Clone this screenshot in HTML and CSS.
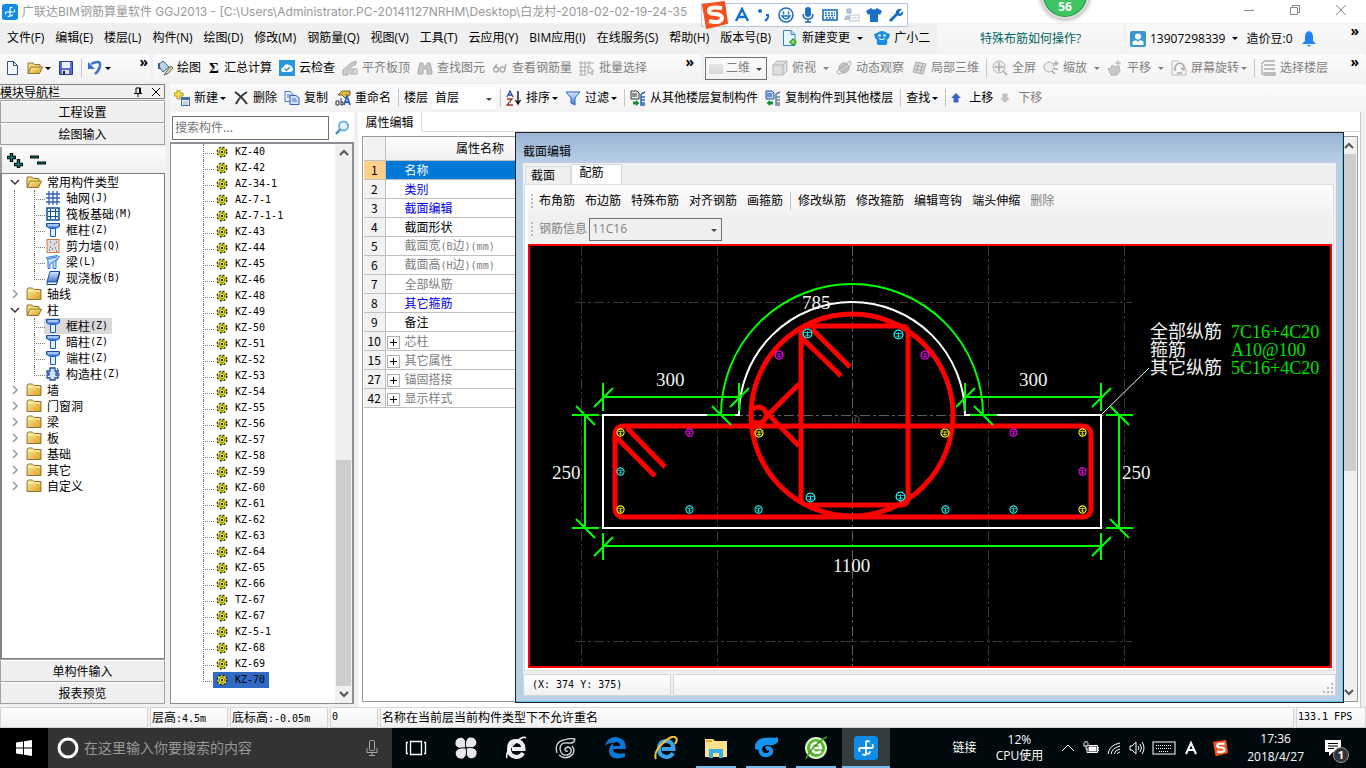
FILE: index.html
```
<!DOCTYPE html>
<html lang="zh-CN">
<head>
    <title>广联达BIM钢筋算量软件 GGJ2013</title>
    <meta charset="UTF-8">
    <meta name="viewport" content="width=device-width, initial-scale=1.0">
    <link rel="stylesheet" href="styles.css">
</head>
<body>
<!-- shared icons -->
<svg class="defs" aria-hidden="true">
    <linearGradient id="gold" x1="0" y1="0" x2="1" y2="1"><stop offset="0" stop-color="#fff3a8"/><stop offset="1" stop-color="#dc9a1c"/></linearGradient>
    <linearGradient id="blue" x1="0" y1="0" x2="0" y2="1"><stop offset="0" stop-color="#dcebff"/><stop offset="1" stop-color="#3c78d8"/></linearGradient>
    <symbol id="logo" viewBox="0 0 24 24"><rect width="24" height="24" rx="4" fill="#0e8ce8"/><path d="M12 17V7Q12 4 15 5.500M12 17Q12 20 9 18.500M7 12H17Q20 12 18.500 9M7 12Q4 12 5.500 15M12 17Q15 19 16 16" fill="none" stroke="#fff" stroke-width="1.800" stroke-linecap="round"/></symbol>
    <symbol id="gear" viewBox="0 0 12 12"><circle cx="6" cy="6" r="4.800" fill="#f4ee1a" stroke="#222" stroke-width="1.400" stroke-dasharray="2 1.770"/><circle cx="6" cy="6" r="2.600" fill="#ff2" stroke="#555" stroke-width=".7"/><path d="M6 1.500V4M6 8V10.500M1.500 6H4M8 6H10.500" stroke="#555" stroke-width=".7"/><rect x="5" y="5" width="2" height="2" fill="#222"/></symbol>
    <symbol id="folder" viewBox="0 0 16 14"><path d="M1 3V12.500H15V2.500H8L6.500 1H2Z" fill="url(#gold)" stroke="#8d742f"/><path d="M2 4h12" stroke="#fff5bd"/></symbol>
    <symbol id="folder-open" viewBox="0 0 16 14"><path d="M1 12V2H6L7.500 3.500H13V6" fill="#f7da78" stroke="#8d742f"/><path d="M1 12.500L4 6H15.500L12.500 12.500Z" fill="url(#gold)" stroke="#8d742f"/></symbol>
    <symbol id="column" viewBox="0 0 14 14"><path d="M.5.500H13.500V3.500L11 5H3L.5 3.500Z" fill="#5f9be8" stroke="#1b4b9c"/><path d="M4.500 5.500H9.500V13.500H4.500Z" fill="#e3efff" stroke="#1b5bd0"/><path d="M2 2h10" stroke="#e7f3ff"/></symbol>
    <symbol id="grid" viewBox="0 0 14 14"><path d="M3 0V14M7 0V14M11 0V14M0 3H14M0 7H14M0 11H14" stroke="#315fbd" stroke-width="1.300"/></symbol>
    <symbol id="raft" viewBox="0 0 14 14"><path d="M1 1H13V13H1Z" fill="#dff0ff" stroke="#174f93" stroke-width="1.500"/><path d="M4.500 2V12M9.500 2V12M2 4.500H12M2 9.500H12" stroke="#174f93"/><rect x="5" y="5" width="4" height="4" fill="#fff"/></symbol>
    <symbol id="wall" viewBox="0 0 14 14"><rect x="1" y=".5" width="12" height="13" fill="#ddd" stroke="#d9793d"/><path d="M4 3h1M8 5h1M4 8h1M6 10h1M9 9h1M10 3h1M3 11h1M10 12h1" stroke="#444"/></symbol>
    <symbol id="beam" viewBox="0 0 14 14"><path d="M.5 2.500L11 .5L13.500 2L10 5V13.500H7V7L4 9V13.500H2V6Z" fill="#c5e4ff" stroke="#2d78cf"/><path d="M2 4L11 2M7 7L12 4" stroke="#2d78cf"/></symbol>
    <symbol id="slab" viewBox="0 0 14 14"><path d="M4 .5H13.500L10.500 11H1Z" fill="url(#blue)" stroke="#1e50a8"/><path d="M1 11V13.500H10.500L13.500 3V.500" fill="none" stroke="#12357a"/></symbol>
    <symbol id="struct" viewBox="0 0 14 14"><path d="M4 1H9V4H12V6H10V8H12V11H9V13H4V11H1V8H3V6H1V4H4Z" fill="#cfe2fb" stroke="#244f9e" stroke-width="1.300"/><path d="M11 1L13 4M13 6v3" stroke="#244f9e"/></symbol>
    <symbol id="new" viewBox="0 0 16 16"><path d="M3.500 1.500H9.500L13.500 5.500V14.500H3.500Z" fill="#f5faff" stroke="#35507f"/><path d="M9.500 1.500V5.500H13.500" fill="none" stroke="#35507f"/></symbol>
    <symbol id="save" viewBox="0 0 16 16"><path d="M1.500 1.500H14.500V14.500H1.500Z" fill="#5a6ed2" stroke="#2a3a9a"/><rect x="4" y="2" width="8" height="6" fill="#eef2ff"/><rect x="4" y="10" width="7" height="4" fill="#dde"/><rect x="5" y="11" width="2" height="3" fill="#223"/></symbol>
    <symbol id="undo" viewBox="0 0 16 16"><path d="M4 4Q14-1 13 6Q12 11 8 14" fill="none" stroke="#3c6fd2" stroke-width="2.500"/><path d="M1 2V9H8Z" fill="#3c6fd2"/></symbol>
    <symbol id="paint" viewBox="0 0 16 16"><path d="M1 5L6 1L12 7L6 12Z" fill="#b8d4ef" stroke="#3b5f86"/><path d="M2 3V9" stroke="#3b5f86" stroke-width="2"/><path d="M14 6L9 12L7 15L11 13.500L16 8Z" fill="#ffd452" stroke="#3e63a0"/></symbol>
    <symbol id="cloud" viewBox="0 0 16 16"><rect width="16" height="16" fill="#2b95dd"/><path d="M3 12Q1 8 4.500 7Q6 3 10 5Q14 6 14 10Q13 12 11 12Z" fill="#fff"/><path d="M5.500 8.500L7.500 10.500L11 7" fill="none" stroke="#2b95dd" stroke-width="1.500"/></symbol>
    <symbol id="g-align" viewBox="0 0 16 16"><path d="M1 10L9 3L14 1V4L6 9V15H1Z" fill="#ccc" stroke="#aaa"/><path d="M8 9H15V14H8ZM10 9v5M12 9v5" fill="#eee" stroke="#aaa"/></symbol>
    <symbol id="g-find" viewBox="0 0 16 16"><path d="M3 3H6V6H10V3H13L15 12V14H10V9H6V14H1V12Z" fill="#c6c6c6" stroke="#aaa"/></symbol>
    <symbol id="g-glass" viewBox="0 0 16 16"><circle cx="4" cy="9.500" r="2.500" fill="none" stroke="#aaa" stroke-width="1.300"/><circle cx="10.500" cy="9.500" r="2.500" fill="none" stroke="#aaa" stroke-width="1.300"/><path d="M2 8L5 4M12.500 9.500L14 4" stroke="#aaa" stroke-width="1.300"/></symbol>
    <symbol id="g-batch" viewBox="0 0 16 16"><path d="M2 1V15M6 1V15M10 1V7M0 3H15M0 7H9M0 11H7M0 15H7" stroke="#aaa"/><path d="M9 6V14L11 12L13 15L14 14L12.500 11.500L15 11Z" fill="#eee" stroke="#aaa"/></symbol>
    <symbol id="g-cube" viewBox="0 0 16 16"><path d="M1 5L5 1H15V11L11 15H1Z" fill="#dedede" stroke="#b5b5b5"/><path d="M1 5H11V15M11 5L15 1" fill="none" stroke="#b5b5b5"/></symbol>
    <symbol id="g-orbit" viewBox="0 0 16 16"><circle cx="8" cy="8" r="5" fill="#c8c8c8" stroke="#b0b0b0"/><path d="M2 14Q-1 11 6 7L14 1Q17 4 11 9L4 14Z" fill="none" stroke="#aaa"/></symbol>
    <symbol id="g-part" viewBox="0 0 16 16"><path d="M5 2L15 4L12 14L2 12ZM8 2.500L5 12.500M12 3.500L9 13.500M4 5.500L14 7.500M3 9L13 11" fill="#ddd" stroke="#aaa"/></symbol>
    <symbol id="g-full" viewBox="0 0 16 16"><circle cx="7" cy="7" r="6" fill="#eee" stroke="#b2b2b2"/><path d="M7 2.500V11.500M2.500 7H11.500M11 11L15 15" stroke="#aaa" stroke-width="1.500"/></symbol>
    <symbol id="g-zoom" viewBox="0 0 16 16"><circle cx="6" cy="7" r="5" fill="#eee" stroke="#b2b2b2"/><path d="M9 11L12 14M13 1V6M10.500 3.500H15.500M11 9H15" stroke="#aaa" stroke-width="1.500"/></symbol>
    <symbol id="g-pan" viewBox="0 0 16 16"><path d="M1 8L4 9L5 5L8 7L12 6L13 11L10 15H4Z" fill="#c9c9c9" stroke="#b2b2b2"/><path d="M11 0V6M8 3H14" stroke="#aaa"/></symbol>
    <symbol id="g-rot" viewBox="0 0 16 16"><path d="M1 1H8M1 1V15H15V8" fill="none" stroke="#bbb"/><path d="M4 11Q3 4 9 3Q14 4 13 10M13 10L10 8M6 13H11" fill="none" stroke="#aaa" stroke-width="1.600"/></symbol>
    <symbol id="g-floor" viewBox="0 0 16 16"><path d="M1 4L5 1H15M4 5H15M4 9H15M4 13H15V15H4ZM2 5V15" fill="none" stroke="#aaa" stroke-width="1.300"/></symbol>
    <symbol id="add" viewBox="0 0 16 16"><path d="M3 0H6V3H9V6H6V9H3V6H0V3H3Z" fill="#ffe14d" stroke="#a58412" stroke-width=".8"/><rect x="7.500" y="7.500" width="8" height="8" fill="#eef5ff" stroke="#456fb5"/><path d="M8 9h7" stroke="#456fb5" stroke-width="2"/><path d="M9 12h5M9 14h5" stroke="#8aaede"/></symbol>
    <symbol id="del" viewBox="0 0 16 16"><path d="M2 2Q8 6 14 14M14 2Q7 6 3 14" fill="none" stroke="#333" stroke-width="2"/></symbol>
    <symbol id="copy" viewBox="0 0 16 16"><path d="M1 1.500H6L9 4V11.500H1Z" fill="#e6f0ff" stroke="#4a77c4"/><path d="M6 5.500H12L15 8V14.500H6Z" fill="#cfe0fb" stroke="#3561b5"/><path d="M3 5h4M3 7h3M8 9h4M8 11h5" stroke="#4a77c4"/></symbol>
    <symbol id="rename" viewBox="0 0 16 16"><path d="M3 5L7 1H15V5L10 8L7 5Z" fill="#e7b93a" stroke="#69632d"/><path d="M1 14V11H4V15H1ZM6 8V15H8V12H6" fill="none" stroke="#333"/><path d="M9 15L12 6L15 15M10 12H14" fill="none" stroke="#2d63c4" stroke-width="1.800"/></symbol>
    <symbol id="sort" viewBox="0 0 16 16"><path d="M1 7L4 1L7 7M2 5H6" fill="none" stroke="#2b4a9e" stroke-width="1.300"/><path d="M1 9H6L1 15H7" fill="none" stroke="#a03030" stroke-width="1.300"/><path d="M12 1V13M9.500 10L12 14L14.500 10" fill="none" stroke="#111" stroke-width="1.400"/></symbol>
    <symbol id="filter" viewBox="0 0 16 16"><path d="M1 2H15L10 8V15L6 13V8Z" fill="url(#blue)" stroke="#2b5fc0"/></symbol>
    <symbol id="floorcopy" viewBox="0 0 16 16"><path d="M1 1H7L9 3V9H1Z" fill="#eee" stroke="#333"/><path d="M2 4h5M2 6h5" stroke="#333"/><path d="M3 13H7" stroke="#12902d" stroke-width="3"/><path d="M6 10L9.500 13L6 16Z" fill="#12902d"/><path d="M11 4L15 2M11 7H15M11 10H15M11 13H15M11 4V15H15" fill="none" stroke="#2968bd" stroke-width="1.500"/></symbol>
    <symbol id="floorpaste" viewBox="0 0 16 16"><path d="M1 1H7L9 3V9H1Z" fill="#bcd3f5" stroke="#1f4ea3"/><path d="M2 4h5M2 6h5" stroke="#1f4ea3"/><path d="M4 13H8" stroke="#12902d" stroke-width="3"/><path d="M5 10L1.500 13L5 16Z" fill="#12902d"/><path d="M11 4L15 2M11 7H15M11 10H15M11 13H15M11 4V15H15" fill="none" stroke="#6a7d96" stroke-width="1.500"/></symbol>
    <symbol id="up" viewBox="0 0 10 10"><path d="M5 0L10 5H7.500V9.500H2.500V5H0Z" fill="#3a62c8"/></symbol>
    <symbol id="down" viewBox="0 0 10 10"><path d="M5 10L10 5H7.500V.500H2.500V5H0Z" fill="#c0c0c0"/></symbol>
    <symbol id="page" viewBox="0 0 16 16"><path d="M1.500.500H9L13 4.500V15.500H1.500Z" fill="#eaf6ff" stroke="#3188bd"/><path d="M9 .5V4.500H13" fill="none" stroke="#3188bd"/><path d="M11 8L15 12L11 16L7 12Z" fill="#32a018"/><path d="M11 10v4M9 12h4" stroke="#b6f38e"/></symbol>
    <symbol id="mascot" viewBox="0 0 16 16"><path d="M3 3Q8-1 13 3L16 4L15 8L13 10Q14 14 12 15H4Q2 14 3 10L1 8L0 4Z" fill="#1c8de0"/><circle cx="5.500" cy="5.500" r="1.300" fill="#fff"/><circle cx="10.500" cy="5.500" r="1.300" fill="#fff"/><path d="M5 8.500Q8 11 11 8.500" fill="none" stroke="#fff"/></symbol>
    <symbol id="user" viewBox="0 0 16 16"><rect width="16" height="16" rx="2" fill="#3a96cc"/><circle cx="8" cy="5.500" r="3" fill="#fff"/><path d="M2.500 14V10.500L6 9L8 11L10 9L13.500 10.500V14Z" fill="#fff"/></symbol>
    <symbol id="bell" viewBox="0 0 14 16"><path d="M7 0Q11 1 11 6V10L14 13H0L3 10V6Q3 1 7 0Z" fill="#1e82f0"/><path d="M5 14H9L7 16Z" fill="#1e82f0"/></symbol>
    <symbol id="lens" viewBox="0 0 16 16"><circle cx="9.500" cy="6" r="4.500" fill="#eaf6ff" stroke="#6bb4e8" stroke-width="2"/><path d="M6 9.500L2 14" stroke="#3a8fd8" stroke-width="2.500"/></symbol>
    <symbol id="sogou" viewBox="0 0 28 28"><path d="M3 4L24 1L27 22L7 27Z" fill="#f4511e" stroke="#f4511e" stroke-width="2" stroke-linejoin="round"/><path d="M22 7Q9 5 9 10Q9 13 16 13Q22 14 22 17Q21 23 9 20" fill="none" stroke="#fff" stroke-width="4"/></symbol>
    <symbol id="g-swirl" viewBox="0 0 24 24"><path d="M24 2Q21 8 15 7Q7 6 6 13Q7 20 13 19Q18 18 17 14Q15 11 12 13" fill="none" stroke="currentColor" stroke-width="4"/><path d="M1 13Q0 4 9 2Q15 1 24 2L20 6Q8 4 4 14Z" fill="currentColor"/></symbol>
    <symbol id="e-letter" viewBox="0 0 24 24"><path d="M19 17Q17 21 12 21Q5 20 5 13Q5 5 12 5Q19 5 19.500 13H8" fill="none" stroke="currentColor" stroke-width="4"/></symbol>
    <symbol id="rebar" viewBox="-5 -5 10 10"><circle r="4" fill="none" stroke="currentColor" stroke-width="1.200"/><path d="M-3 -1H3M-2 1.500H2M0 -2V3" stroke="currentColor" stroke-width=".8"/></symbol>
</svg>

<header class="titlebar">
    <svg class="ic"><use href="#logo"/></svg>
    <h1>广联达BIM钢筋算量软件 GGJ2013 - [C:\Users\Administrator.PC-20141127NRHM\Desktop\白龙村-2018-02-02-19-24-35</h1>
    <div class="winbtns">
        <button aria-label="最小化"><svg viewBox="0 0 12 12"><path d="M1 6.500H11"/></svg></button>
        <button aria-label="还原"><svg viewBox="0 0 12 12"><path d="M1.500 3.500H8.500V10.500H1.500ZM3.500 3V1.500H10.500V8.500H9"/></svg></button>
        <button aria-label="关闭"><svg viewBox="0 0 12 12"><path d="M1 1L11 11M11 1L1 11"/></svg></button>
    </div>
</header>

<!-- floating input method bar -->
<div class="ime">
    <svg class="ime-logo"><use href="#sogou"/></svg>
    <svg viewBox="0 0 16 16"><path d="M2 14L8 2L14 14M4.500 10H11.500" fill="none" stroke="#1a6fc4" stroke-width="2.400"/></svg>
    <svg viewBox="0 0 16 16"><circle cx="4" cy="4" r="2" fill="#1a6fc4"/><path d="M10 8H12Q13 11 9 14" fill="none" stroke="#1a6fc4" stroke-width="2"/></svg>
    <svg viewBox="0 0 16 16"><circle cx="8" cy="8" r="7" fill="none" stroke="#1a6fc4" stroke-width="1.600"/><path d="M5.500 4.500v3M10.500 4.500v3M4 9Q8 15 12 9Z" fill="none" stroke="#1a6fc4" stroke-width="1.500"/></svg>
    <svg viewBox="0 0 16 16"><rect x="5" y="0" width="6" height="10" rx="3" fill="#1a6fc4"/><path d="M3 7Q3 12 8 12Q13 12 13 7M8 12V15M5 15H11" fill="none" stroke="#1a6fc4" stroke-width="1.500"/></svg>
    <svg viewBox="0 0 16 16"><rect x="1" y="3" width="14" height="10" fill="none" stroke="#1a6fc4" stroke-width="1.600"/><path d="M3 6H13M3 8.500H13M4 11H12" stroke="#1a6fc4" stroke-width="1.300" stroke-dasharray="2 1"/></svg>
    <svg viewBox="0 0 16 16"><circle cx="5" cy="4" r="3" fill="#b4c4d8"/><path d="M0 13Q0 8 6 8V13Z" fill="#b4c4d8"/><rect x="6" y="8" width="9" height="6" fill="#fff" stroke="#b4c4d8"/><path d="M8 11h5" stroke="#b4c4d8"/></svg>
    <svg viewBox="0 0 16 16"><path d="M5 1Q8 4 11 1L16 4L14 8L12 7V15H4V7L2 8L0 4Z" fill="#1a6fc4"/></svg>
    <svg viewBox="0 0 16 16"><path d="M2 14L9 7" stroke="#1a6fc4" stroke-width="3"/><path d="M14 2L11 5L12 7L15 4Q16 9 11 9Q7 8 8 4Q10 1 14 2Z" fill="#1a6fc4"/></svg>
</div>
<div class="ball">56</div>

<nav class="menubar">
    <div class="menus">
        <button>文件(F)</button><button>编辑(E)</button><button>楼层(L)</button><button>构件(N)</button><button>绘图(D)</button><button>修改(M)</button><button>钢筋量(Q)</button><button>视图(V)</button><button>工具(T)</button><button>云应用(Y)</button><button>BIM应用(I)</button><button>在线服务(S)</button><button>帮助(H)</button><button>版本号(B)</button>
        <button><svg class="ic"><use href="#page"/></svg>新建变更<i class="arr far"></i></button>
        <button><svg class="ic"><use href="#mascot"/></svg>广小二</button>
    </div>
    <div class="tip"><a href="#">特殊布筋如何操作?</a></div>
    <div class="account">
        <button><svg class="ic"><use href="#user"/></svg>13907298339<i class="arr far"></i></button>
        <span>造价豆:0</span>
        <button aria-label="消息"><svg class="ic"><use href="#bell"/></svg></button>
        <b class="more">»</b>
    </div>
</nav>

<div class="toolbars">
    <div class="bar files">
        <button aria-label="新建"><svg class="ic"><use href="#new"/></svg></button>
        <button aria-label="打开"><svg class="ic"><use href="#folder-open"/></svg><i class="arr"></i></button>
        <button aria-label="保存"><svg class="ic"><use href="#save"/></svg></button>
        <i class="sep"></i>
        <button aria-label="撤销"><svg class="ic"><use href="#undo"/></svg><i class="arr"></i></button>
        <b class="more">»</b>
    </div>
    <div class="bar">
        <button><svg class="ic"><use href="#paint"/></svg>绘图</button>
        <button><b class="sigma">Σ</b>汇总计算</button>
        <button><svg class="ic"><use href="#cloud"/></svg>云检查</button>
        <button disabled><svg class="ic"><use href="#g-align"/></svg>平齐板顶</button>
        <button disabled><svg class="ic"><use href="#g-find"/></svg>查找图元</button>
        <button disabled><svg class="ic"><use href="#g-glass"/></svg>查看钢筋量</button>
        <button disabled><svg class="ic"><use href="#g-batch"/></svg>批量选择</button>
        <b class="more">»</b>
    </div>
    <div class="bar">
        <span class="combo dim"><select aria-label="视图维度" disabled><option>二维</option></select></span>
        <button disabled><svg class="ic"><use href="#g-cube"/></svg>俯视<i class="arr far"></i></button>
        <button disabled><svg class="ic"><use href="#g-orbit"/></svg>动态观察</button>
        <button disabled><svg class="ic"><use href="#g-part"/></svg>局部三维</button>
        <i class="sep"></i>
        <button disabled><svg class="ic"><use href="#g-full"/></svg>全屏</button>
        <button disabled><svg class="ic"><use href="#g-zoom"/></svg>缩放<i class="arr far"></i></button>
        <button disabled><svg class="ic"><use href="#g-pan"/></svg>平移<i class="arr far"></i></button>
        <button disabled><svg class="ic"><use href="#g-rot"/></svg>屏幕旋转<i class="arr"></i></button>
        <i class="sep"></i>
        <button disabled><svg class="ic"><use href="#g-floor"/></svg>选择楼层</button>
        <b class="more">»</b>
    </div>
</div>

<main class="workspace">
    <aside class="nav">
        <div class="nav-head"><h2>模块导航栏</h2>
            <svg viewBox="0 0 10 10"><path d="M3 1H7.500V6M3 1V6M6.500 1V6M1 6.500H9M5 6V10" fill="none" stroke="#000"/></svg>
            <svg viewBox="0 0 10 10"><path d="M1 1L9 9M9 1L1 9" stroke="#000"/></svg>
        </div>
        <button class="section">工程设置</button>
        <button class="section">绘图输入</button>
        <div class="nav-tools">
            <svg viewBox="0 0 40 16"><path d="M5.500 1V10M1 5.500H10M12.500 7V16M8 12.500H17" stroke="#000" stroke-width="3.400"/><path d="M5.500 2V9M2 5.500H9M12.500 8V15M9 12.500H16" stroke="#0a8080" stroke-width="1.500"/><path d="M24 5H33M31 11H40" stroke="#000" stroke-width="3"/><path d="M25 5H32M32 11H39" stroke="#0a8080"/></svg>
        </div>
        <ul class="tree">
            <li class="open"><div class="node"><svg class="chev"><path d="M1 3L5 7L9 3"/></svg><svg class="fo"><use href="#folder-open"/></svg>常用构件类型</div>
                <ul>
                    <li><span><svg><use href="#grid"/></svg>轴网<span class="m">(J)</span></span></li>
                    <li><span><svg><use href="#raft"/></svg>筏板基础<span class="m">(M)</span></span></li>
                    <li><span><svg><use href="#column"/></svg>框柱<span class="m">(Z)</span></span></li>
                    <li><span><svg><use href="#wall"/></svg>剪力墙<span class="m">(Q)</span></span></li>
                    <li><span><svg><use href="#beam"/></svg>梁<span class="m">(L)</span></span></li>
                    <li><span><svg><use href="#slab"/></svg>现浇板<span class="m">(B)</span></span></li>
                </ul>
            </li>
            <li><div class="node"><svg class="chev"><path d="M3 1L7 5L3 9"/></svg><svg class="fo"><use href="#folder"/></svg>轴线</div></li>
            <li class="open"><div class="node"><svg class="chev"><path d="M1 3L5 7L9 3"/></svg><svg class="fo"><use href="#folder-open"/></svg>柱</div>
                <ul>
                    <li><span class="cur"><svg><use href="#column"/></svg>框柱<span class="m">(Z)</span></span></li>
                    <li><span><svg><use href="#column"/></svg>暗柱<span class="m">(Z)</span></span></li>
                    <li><span><svg><use href="#column"/></svg>端柱<span class="m">(Z)</span></span></li>
                    <li><span><svg><use href="#struct"/></svg>构造柱<span class="m">(Z)</span></span></li>
                </ul>
            </li>
            <li><div class="node"><svg class="chev"><path d="M3 1L7 5L3 9"/></svg><svg class="fo"><use href="#folder"/></svg>墙</div></li>
            <li><div class="node"><svg class="chev"><path d="M3 1L7 5L3 9"/></svg><svg class="fo"><use href="#folder"/></svg>门窗洞</div></li>
            <li><div class="node"><svg class="chev"><path d="M3 1L7 5L3 9"/></svg><svg class="fo"><use href="#folder"/></svg>梁</div></li>
            <li><div class="node"><svg class="chev"><path d="M3 1L7 5L3 9"/></svg><svg class="fo"><use href="#folder"/></svg>板</div></li>
            <li><div class="node"><svg class="chev"><path d="M3 1L7 5L3 9"/></svg><svg class="fo"><use href="#folder"/></svg>基础</div></li>
            <li><div class="node"><svg class="chev"><path d="M3 1L7 5L3 9"/></svg><svg class="fo"><use href="#folder"/></svg>其它</div></li>
            <li><div class="node"><svg class="chev"><path d="M3 1L7 5L3 9"/></svg><svg class="fo"><use href="#folder"/></svg>自定义</div></li>
        </ul>
        <button class="section">单构件输入</button>
        <button class="section">报表预览</button>
    </aside>

    <div class="content">
        <div class="bar edit">
            <button><svg class="ic"><use href="#add"/></svg>新建<i class="arr"></i></button>
            <button><svg class="ic"><use href="#del"/></svg>删除</button>
            <button><svg class="ic"><use href="#copy"/></svg>复制</button>
            <button><svg class="ic"><use href="#rename"/></svg>重命名</button>
            <i class="sep"></i>
            <label for="floor">楼层</label>
            <span class="combo floor"><select id="floor"><option>首层</option></select></span>
            <i class="sep"></i>
            <button><svg class="ic"><use href="#sort"/></svg>排序<i class="arr"></i></button>
            <button><svg class="ic"><use href="#filter"/></svg>过滤<i class="arr"></i></button>
            <i class="sep"></i>
            <button><svg class="ic"><use href="#floorcopy"/></svg>从其他楼层复制构件</button>
            <button><svg class="ic"><use href="#floorpaste"/></svg>复制构件到其他楼层</button>
            <i class="sep"></i>
            <button>查找<i class="arr"></i></button>
            <i class="sep"></i>
            <button><svg class="ic sm"><use href="#up"/></svg>上移</button>
            <button disabled><svg class="ic sm"><use href="#down"/></svg>下移</button>
        </div>
        <div class="panes">
            <section class="parts">
                <div class="find">
                    <input type="text" placeholder="搜索构件..." aria-label="搜索构件">
                    <button aria-label="搜索"><svg class="ic"><use href="#lens"/></svg></button>
                </div>
                <div class="listbox">
                    <ul class="list" id="parts"></ul>
                    <div class="scroll"><svg viewBox="0 0 10 10"><path d="M1 7L5 3L9 7"/></svg><i class="thumb low"></i><svg viewBox="0 0 10 10"><path d="M1 3L5 7L9 3"/></svg></div>
                </div>
            </section>

            <section class="props">
                <div class="tabs"><button class="tab">属性编辑</button></div>
                <div class="sheet">
                    <table>
                        <thead><tr><th></th><th>属性名称</th><th></th></tr></thead>
                        <tbody>
                        <tr class="sel"><th>1</th><td>名称</td><td></td></tr>
                        <tr class="link"><th>2</th><td>类别</td><td></td></tr>
                        <tr class="link"><th>3</th><td>截面编辑</td><td></td></tr>
                        <tr><th>4</th><td>截面形状</td><td></td></tr>
                        <tr class="off"><th>5</th><td>截面宽<span class="m">(B</span>边<span class="m">)(mm)</span></td><td></td></tr>
                        <tr class="off"><th>6</th><td>截面高<span class="m">(H</span>边<span class="m">)(mm)</span></td><td></td></tr>
                        <tr class="off"><th>7</th><td>全部纵筋</td><td></td></tr>
                        <tr class="link"><th>8</th><td>其它箍筋</td><td></td></tr>
                        <tr><th>9</th><td>备注</td><td></td></tr>
                        <tr class="off group"><th>10</th><td><button aria-label="展开"></button>芯柱</td><td></td></tr>
                        <tr class="off group"><th>15</th><td><button aria-label="展开"></button>其它属性</td><td></td></tr>
                        <tr class="off group"><th>27</th><td><button aria-label="展开"></button>锚固搭接</td><td></td></tr>
                        <tr class="off group"><th>42</th><td><button aria-label="展开"></button>显示样式</td><td></td></tr>
                        </tbody>
                    </table>
                    <div class="scroll"><svg viewBox="0 0 10 10"><path d="M1 7L5 3L9 7"/></svg><i class="thumb high"></i><svg viewBox="0 0 10 10"><path d="M1 3L5 7L9 3"/></svg></div>
                </div>

                <div class="dialog" role="dialog" aria-label="截面编辑">
                    <h2>截面编辑</h2>
                    <div class="dlg-body">
                        <div class="dlg-tabs"><button>截面</button><button class="on">配筋</button></div>
                        <div class="dlg-panel">
                            <div class="dlg-bar"><i class="grip"></i>
                                <button>布角筋</button><button>布边筋</button><button>特殊布筋</button><button>对齐钢筋</button><button>画箍筋</button><i class="sep"></i><button>修改纵筋</button><button>修改箍筋</button><button>编辑弯钩</button><button>端头伸缩</button><button disabled>删除</button>
                            </div>
                            <div class="dlg-bar info"><i class="grip"></i>
                                <label for="rebar-info">钢筋信息</label>
                                <span class="combo rebar"><select id="rebar-info" disabled><option>11C16</option></select></span>
                            </div>
                            <svg class="cad" viewBox="530 246 800 420">
                                <!-- axis grid -->
                                <g class="axis">
                                    <path d="M581.500 246V666M717.500 246V666M988.500 246V666M1124.500 246V666M575 302.500H1132M575 527.500H1132M575 641.500H1132"/>
                                    <path class="main" d="M852.500 246V666M575 415.500H1132"/>
                                </g>
                                <text class="origin" x="854" y="424">0</text>
                                <!-- section outline -->
                                <path class="outline" d="M603 415H739A113 113 0 0 1 965 415H1101V528H603Z"/>
                                <path class="leader" d="M1102 414L1149 368"/>
                                <!-- stirrups -->
                                <g class="stirrup">
                                    <rect x="615" y="426" width="476" height="91" rx="8"/>
                                    <circle cx="852" cy="415" r="101"/>
                                    <rect x="801" y="326" width="107" height="179" rx="6"/>
                                    <path d="M812 329L850 367M802 338L841 376M627 428L665 467M617 438L655 476M799 384L767 416M767 413L799 446M753 409A8 8 0 1 1 753 421"/>
                                </g>
                                <!-- dimensions -->
                                <g class="dims">
                                    <path d="M603 397H739M603 383V411M739 383V411M594 407L613 388M730 407L749 388"/>
                                    <path d="M965 397H1101M965 383V411M1101 383V411M956 407L975 388M1092 407L1111 388"/>
                                    <path d="M603 546H1101M603 533V560M1101 533V560M594 556L613 537M1092 556L1111 537"/>
                                    <path d="M585 415V528M572 415H599M572 528H599M576 406L595 425M576 519L595 538"/>
                                    <path d="M1119 415V528M1106 415H1133M1106 528H1133M1110 406L1129 425M1110 519L1129 538"/>
                                    <path d="M721 415A131 131 0 0 1 983 415M707 415H735M712 406L731 425M970 415H997M974 406L993 425"/>
                                </g>
                                <g class="cyan">
                                    <use href="#rebar" x="802" y="328" width="11" height="11"/><use href="#rebar" x="893" y="329" width="11" height="11"/><use href="#rebar" x="805" y="492" width="11" height="11"/><use href="#rebar" x="895" y="491" width="11" height="11"/>
                                    <use href="#rebar" x="616" y="467" width="9" height="9"/><use href="#rebar" x="685" y="505" width="9" height="9"/><use href="#rebar" x="754" y="505" width="9" height="9"/><use href="#rebar" x="941" y="505" width="9" height="9"/><use href="#rebar" x="1009" y="505" width="9" height="9"/>
                                </g>
                                <g class="yellow">
                                    <use href="#rebar" x="616" y="428" width="9" height="9"/><use href="#rebar" x="754" y="428" width="10" height="10"/><use href="#rebar" x="940" y="428" width="10" height="10"/><use href="#rebar" x="1078" y="428" width="9" height="9"/><use href="#rebar" x="616" y="505" width="9" height="9"/><use href="#rebar" x="1078" y="505" width="9" height="9"/>
                                </g>
                                <g class="magenta">
                                    <use href="#rebar" x="685" y="428" width="9" height="9"/><use href="#rebar" x="774" y="350" width="10" height="10"/><use href="#rebar" x="920" y="350" width="10" height="10"/><use href="#rebar" x="1009" y="428" width="9" height="9"/><use href="#rebar" x="1078" y="467" width="9" height="9"/>
                                </g>
                                <g class="nums">
                                    <text x="802" y="309">785</text><text x="656" y="386">300</text><text x="1019" y="386">300</text><text x="552" y="479">250</text><text x="1122" y="479">250</text><text x="833" y="572">1100</text>
                                </g>
                                <g class="keys"><text x="1150" y="338">全部纵筋</text><text x="1150" y="356">箍筋</text><text x="1150" y="374">其它纵筋</text></g>
                                <g class="vals"><text x="1231" y="338">7C16+4C20</text><text x="1231" y="356">A10@100</text><text x="1231" y="374">5C16+4C20</text></g>
                            </svg>
                        </div>
                        <div class="dlg-status"><span class="m">(X: 374 Y: 375)</span><span class="fill"><svg viewBox="0 0 12 12"><path d="M8 1h2M8 5h2M8 9h2M4 5h2M4 9h2M0 9h2" stroke="#b8b8b8" stroke-width="2"/></svg></span></div>
                    </div>
                </div>
            </section>
        </div>
    </div>
</main>

<footer class="status">
    <span></span><span>层高<span class="m">:4.5m</span></span><span>底标高<span class="m">:-0.05m</span></span><span class="m">0</span><span>名称在当前层当前构件类型下不允许重名</span><span class="m">133.1 FPS</span>
</footer>

<div class="taskbar">
    <button class="start" aria-label="开始"><svg viewBox="0 0 16 16"><path d="M0 2.500L7 1.500V7.500H0ZM8 1.300L16 0V7.500H8ZM0 8.500H7V14.500L0 13.500ZM8 8.500H16V16L8 14.700Z" fill="#fff"/></svg></button>
    <div class="cortana">
        <svg viewBox="0 0 22 22"><circle cx="11" cy="11" r="9" fill="none" stroke="#fff" stroke-width="3"/></svg>
        <input type="text" placeholder="在这里输入你要搜索的内容" aria-label="搜索">
        <svg class="mic" viewBox="0 0 12 16"><rect x="3.500" y=".5" width="5" height="10" rx="1"/><path d="M1 8V12.500H11V8M6 12.500V15.500M3 15.500H9"/></svg>
    </div>
    <div class="apps">
        <button aria-label="任务视图"><svg viewBox="0 0 24 24"><path d="M6.500 5.500H17.500V18.500H6.500ZM4 6.500H2.500V17.500H4M20 6.500H21.500V17.500H20" fill="none" stroke="#fff" stroke-width="1.300"/></svg></button>
        <button aria-label="风扇"><svg viewBox="0 0 24 24"><g fill="#e8e8e8" stroke="#000a0d"><path d="M12 12Q4 14 1 9Q0 2 7 1Q13 2 12 12Z"/><path d="M12 12Q10 4 15 1Q22 0 23 7Q22 13 12 12Z"/><path d="M12 12Q20 10 23 15Q24 22 17 23Q11 22 12 12Z"/><path d="M12 12Q14 20 9 23Q2 24 1 17Q2 11 12 12Z"/></g></svg></button>
        <button aria-label="浏览器" class="white"><svg viewBox="0 0 24 24"><use href="#e-letter"/><path d="M3 22Q1 17 10 8T22 2" fill="none" stroke="#fff" stroke-width="1.500"/></svg></button>
        <button aria-label="广联达" class="white"><svg viewBox="0 0 24 24"><path d="M21 3Q20 8 14 7Q6 6 6 13Q7 20 13 19Q18 18 17 13Q14 9 11 13Q11 16 14 15M3 17Q0 6 10 4Q16 2 21 3M5 19Q12 25 19 18Q21 13 18 10" fill="none" stroke="#ddd" stroke-width="1.300"/></svg></button>
        <button aria-label="Edge" class="edge"><svg viewBox="0 0 24 24"><path d="M1 10Q3 1 12 1Q22 2 22 13H9Q9 19 21 17V21Q5 26 5 14Q6 8 11 7Q5 6 1 10ZM9 10H16Q16 6 12 6Q9 7 9 10Z" fill="#0b78d7"/></svg></button>
        <button aria-label="Internet Explorer" class="ie"><svg viewBox="0 0 24 24"><use href="#e-letter"/><path d="M2 23Q-1 16 9 7T22 2Q24 3 21 8" fill="none" stroke="#f6c430" stroke-width="2"/></svg></button>
        <button aria-label="文件夹" class="run"><svg viewBox="0 0 24 24"><path d="M1 3H9L11 5H23V21H1Z" fill="#ffe08c"/><path d="M2 5H8" stroke="#e8a820" stroke-width="2"/><path d="M5 22V13H19V22H15V17H9V22Z" fill="#36aee6"/></svg></button>
        <button aria-label="广联达云" class="run swirl"><svg><use href="#g-swirl"/></svg></button>
        <button aria-label="360浏览器" class="run"><svg viewBox="0 0 24 24"><circle cx="12" cy="12" r="10" fill="#56b82c" stroke="#e0f5d4" stroke-width="2"/><path d="M17 15Q14 18 10 16Q6 13 8 9Q11 5 15 8Q17 10 17 12H9" fill="none" stroke="#fff" stroke-width="2.500"/><path d="M2 23Q4 17 11 10T23 1" fill="none" stroke="#3f9c1c" stroke-width="1.500"/></svg></button>
        <button aria-label="GGJ2013" class="run active"><svg><use href="#logo"/></svg></button>
    </div>
    <div class="tray">
        <span class="links">链接</span>
        <span class="cpu">12%<br>CPU使用</span>
        <svg viewBox="0 0 16 16"><path d="M2 11L8 5L14 11"/></svg>
        <svg viewBox="0 0 16 16"><path d="M6 5.500H14.500V12.500H4V9M14.500 7.500H16V10.500H14.500M1 3V6H5V3M3 6V9H5M2 1V3M4 1V3"/><rect x="6" y="7" width="7" height="4" fill="#fff"/></svg>
        <svg viewBox="0 0 16 16"><path d="M2 14Q3 5 14 3M5 14Q6 8 14 6M8 14Q9 10 14 9M11 14Q12 12 14 12"/></svg>
        <svg viewBox="0 0 16 16"><path d="M1 6H3L7 2V14L3 10H1ZM9 6Q11 8 9 10M11 4Q14 8 11 12M13 2Q17 8 13 14"/></svg>
        <svg class="kbd" viewBox="0 0 24 14"><rect x="1" y="1" width="22" height="12"/><path d="M4 4.500H20M4 7.500H20M7 10.500H17" stroke-dasharray="1 1"/></svg>
        <svg viewBox="0 0 16 16"><path d="M3 14L8 3L13 14M5 10H11" stroke-width="2"/></svg>
        <svg class="sg"><use href="#sogou"/></svg>
        <span class="clock">17:36<br>2018/4/27</span>
        <span class="note"><svg viewBox="0 0 16 16"><path d="M0 0H16V12H8L4 16V12H0Z" fill="#fff" stroke="none"/><path d="M3 3.500H13M3 6H13M3 8.500H9" stroke="#000"/></svg><b>1</b></span>
    </div>
</div>
<script src="parts.js"></script>
</body>
</html>
```
FILE: parts.js
```
const names = ['KZ-40', 'KZ-42', 'AZ-34-1', 'AZ-7-1', 'AZ-7-1-1', 'KZ-43', 'KZ-44', 'KZ-45', 'KZ-46', 'KZ-48'];
for (let i = 49; i <= 66; i++) {
    names.push('KZ-' + i);
}
names.push('TZ-67', 'KZ-67', 'KZ-5-1', 'KZ-68', 'KZ-69', 'KZ-70');

document.getElementById('parts').innerHTML = names.map(name =>
    `<li><span class="${name === 'KZ-70' ? 'cur' : ''}"><svg><use href="#gear"/></svg>${name}</span></li>`
).join('');
```
FILE: styles.css
```
* {
    box-sizing: border-box;
}

body {
    margin: 0;
    height: 100vh;
    display: flex;
    flex-direction: column;
    overflow: hidden;
    background: #f0f0f0;
    color: #000;
    font: 12px/16px "Open Sans", "Noto Sans CJK SC", sans-serif;
}

button, input, select {
    font: inherit;
    color: inherit;
    background: none;
    border: 0;
    padding: 0;
    margin: 0;
    border-radius: 0;
}

button {
    white-space: nowrap;
}

button:disabled, select:disabled {
    color: #808080;
    opacity: 1;
}

h1, h2 {
    margin: 0;
    font-size: 12px;
    font-weight: normal;
}

ul {
    list-style: none;
    margin: 0;
    padding: 0;
}

svg {
    flex: none;
}

.defs {
    position: absolute;
    width: 0;
    height: 0;
}

.m {
    font-family: "DejaVu Sans Mono", monospace;
    font-size: 10px;
}

.ic {
    width: 16px;
    height: 16px;
}

.ic.sm {
    width: 10px;
    height: 10px;
    margin-right: 4px;
}

.arr {
    border: 3px solid transparent;
    border-top-color: currentColor;
    border-bottom: 0;
    margin-left: -2px;
}

.arr.far {
    margin-left: 3px;
}

.sep {
    width: 1px;
    height: 18px;
    margin-right: -2px;
    background: #c4c4c4;
}

.more {
    align-self: flex-start;
    margin-left: auto;
    padding-right: 7px;
    font-size: 14px;
    line-height: 14px;
}

/* title bar */
.titlebar {
    display: flex;
    align-items: center;
    height: 23px;
    padding: 0 2px;
    background: #fff;
    color: #999;
    gap: 4px;
    flex: none;
}

.titlebar h1 {
    white-space: nowrap;
    font-family: "Inter", "Noto Sans CJK SC", sans-serif;
}

.winbtns {
    display: flex;
    margin-left: auto;
}

.winbtns button {
    width: 46px;
    height: 20px;
}

.winbtns svg {
    width: 12px;
    height: 12px;
    fill: none;
    stroke: #888;
}

.ime {
    position: absolute;
    left: 701px;
    top: 3px;
    width: 207px;
    height: 24px;
    display: flex;
    align-items: center;
    gap: 6px;
    background: #fff;
    border: 1px solid #b4c6dc;
}

.ime svg {
    width: 16px;
    height: 16px;
}

.ime .ime-logo {
    width: 28px;
    height: 28px;
    margin-left: -2px;
}

.ball {
    position: absolute;
    right: 277px;
    top: -29px;
    width: 48px;
    height: 48px;
    border-radius: 50%;
    border: 2px solid #ddd;
    background: #3fc463;
    box-shadow: 0 0 4px 1px #aaa, inset 0 0 0 1px #1f9448;
    color: #fff;
    font-weight: bold;
    text-align: center;
    padding-top: 26px;
}

/* menu */
.menubar {
    display: flex;
    gap: 2px;
    height: 30px;
    flex: none;
}

.menubar button, .bar button {
    display: flex;
    align-items: center;
    gap: 4px;
}

.menus {
    display: flex;
    align-items: center;
    gap: 11px;
    width: 935px;
    flex: none;
    padding-left: 7px;
}

.tip, .account {
    background: linear-gradient(#f9f9f9, #f3f3f3);
    border-radius: 3px;
    margin-top: 1px;
}

.tip {
    width: 187px;
    display: flex;
    align-items: center;
    justify-content: center;
    flex: none;
}

.tip a {
    color: #006464;
    text-decoration: none;
}

.account {
    flex: 1;
    display: flex;
    align-items: center;
    gap: 8px;
    padding-left: 4px;
}

/* toolbars */
.toolbars {
    display: grid;
    grid-template-columns: 150px 548px 1fr;
    gap: 3px;
    height: 31px;
    flex: none;
}

.bar {
    display: flex;
    align-items: center;
    gap: 7px;
    padding-left: 4px;
    background: linear-gradient(#fcfcfc, #f2f2f2);
    border-radius: 3px;
    white-space: nowrap;
    height: 28px;
    margin-top: 1px;
}

.bar .more {
    padding-top: 1px;
}

.files .more {
    padding-right: 2px;
}

.sigma {
    width: 12px;
    font: bold 15px/16px "Liberation Serif", serif;
}

.combo {
    position: relative;
    display: flex;
}

.combo::after {
    content: "";
    position: absolute;
    right: 4px;
    top: 50%;
    border: 3px solid transparent;
    border-top-color: #444;
    border-bottom: 0;
}

.combo select {
    appearance: none;
    width: 100%;
    height: 100%;
}

.combo.dim {
    width: 62px;
    height: 23px;
    margin: 0 -2px 0 -3px;
    border: 1px solid #707070;
    background: linear-gradient(#e4e4e4, #d8d8d8) 3px 6px / 14px 10px no-repeat;
}

.dim select {
    padding-left: 20px;
}

.combo.floor {
    width: 64px;
    height: 22px;
    margin: 0 -3px;
    background: #fff;
}

.floor select {
    padding-left: 3px;
}

/* workspace */
.workspace {
    display: grid;
    grid-template-columns: 165px minmax(0, 1fr);
    gap: 5px;
    flex: 1;
    min-height: 0;
}

.nav, .tree, .parts, .tabs, .props table {
    font-family: "Noto Sans CJK SC", sans-serif;
}

.nav {
    display: flex;
    flex-direction: column;
    min-height: 0;
    padding-bottom: 3px;
}

.nav-head {
    display: flex;
    align-items: center;
    gap: 8px;
    height: 15px;
    margin-bottom: 2px;
    border: 1px solid #808080;
    border-left: 0;
    padding-right: 3px;
}

.nav-head h2 {
    flex: 1;
}

.nav-head svg {
    width: 10px;
    height: 10px;
}

.section {
    height: 22px;
    flex: none;
    border: 1px solid #a0a0a0;
    border-top-color: #fff;
    box-shadow: 0 -1px #a0a0a0;
}

.nav-tools {
    height: 26px;
    margin-top: 2px;
    padding: 5px 4px;
    background: linear-gradient(#fdfdfd, #efefef);
    border-left: 2px solid #a0a0a0;
    flex: none;
}

.nav-tools svg {
    width: 40px;
    height: 16px;
}

.tree {
    flex: 1;
    min-height: 0;
    overflow: hidden;
    background: #fff;
    border: 1px solid #808080;
    border-left-width: 2px;
    margin-bottom: 1px;
}

.node {
    display: flex;
    align-items: center;
    height: 16px;
    padding-left: 8px;
}

.chev {
    width: 10px;
    height: 10px;
    fill: none;
    stroke: #999;
    stroke-width: 1.5;
}

.open .chev {
    stroke: #333;
}

.fo {
    width: 16px;
    height: 14px;
    margin: 0 5px 0 6px;
}

.tree ul {
    margin-left: 12px;
    padding-left: 19px;
    border-left: 1px dotted #777;
}

.tree ul li, .list li {
    position: relative;
    height: 16px;
    padding-left: 10px;
}

.tree ul li::before, .list li::before {
    content: "";
    position: absolute;
    left: 0;
    top: 0;
    width: 10px;
    height: 9px;
    border: dotted #777;
    border-width: 0 0 1px 1px;
}

.tree ul li:not(:last-child)::after, .list li:not(:last-child)::after {
    content: "";
    position: absolute;
    left: 0;
    top: 9px;
    height: 7px;
    border-left: 1px dotted #777;
}

.tree ul li > span, .list span {
    display: inline-flex;
    align-items: center;
    height: 16px;
    padding: 0 4px 0 2px;
}

.tree ul svg {
    width: 14px;
    height: 14px;
    margin-right: 6px;
}

.tree .cur {
    background: #d9d9d9;
}

.content {
    display: flex;
    flex-direction: column;
    min-height: 0;
}

.edit {
    margin: 0;
    flex: none;
}

.panes {
    display: flex;
    flex: 1;
    min-height: 0;
    gap: 4px;
}

/* component list */
.parts {
    display: flex;
    flex-direction: column;
    width: 184px;
    flex: none;
    padding-bottom: 3px;
}

.find {
    display: flex;
    align-items: center;
    gap: 5px;
    height: 30px;
    padding: 4px 0 2px 2px;
    background: #fff;
}

.find input {
    width: 157px;
    height: 24px;
    border: 1px solid #707070;
    padding: 0 2px 3px;
    background: #fff;
}

.find input::placeholder {
    color: #777;
}

.find button {
    height: 16px;
}

.listbox {
    display: flex;
    flex: 1;
    min-height: 0;
    border: 2px solid #8a8f96;
    border-left-width: 1px;
    border-bottom-width: 1px;
    background: #fff;
}

.list {
    flex: 1;
    padding-left: 32px;
    font: 10px/16px "DejaVu Sans Mono", monospace;
}

.list span {
    padding-left: 3px;
}

.list svg {
    width: 12px;
    height: 12px;
    margin-right: 7px;
}

.list .cur {
    background: #316ac5;
}

.scroll {
    display: flex;
    flex-direction: column;
    align-items: center;
    width: 17px;
    flex: none;
    background: #f0f0f0;
    padding: 4px 0;
}

.scroll svg {
    width: 10px;
    height: 10px;
    fill: none;
    stroke: #555;
    stroke-width: 2;
}

.thumb {
    width: 15px;
    background: #cdcdcd;
    margin: 3px 0;
}

.thumb.low {
    margin-top: auto;
    height: 41%;
}

.thumb.high {
    height: 57%;
    margin-bottom: auto;
}

/* property sheet */
.props {
    position: relative;
    display: flex;
    flex-direction: column;
    flex: 1;
    min-width: 0;
    background: #fff;
    border-right: 1px solid #ccc;
    margin-right: 5px;
}

.tabs {
    height: 20px;
    border-bottom: 1px solid #dcdcdc;
    flex: none;
}

.tab {
    width: 64px;
    height: 20px;
    background: #fff;
    border-right: 1px solid #dcdcdc;
    border-bottom: 1px solid #fff;
}

.sheet {
    display: flex;
    flex: 1;
    min-height: 0;
    margin: 4px 2px 5px 4px;
    border: 1px solid #999;
    padding-left: 1px;
    align-items: flex-start;
}

.sheet .scroll {
    height: 100%;
}

.props table {
    flex: 1;
    border-collapse: collapse;
    table-layout: fixed;
    width: 100%;
}

.props th, .props td {
    height: 19px;
    padding: 0;
    border: 1px solid #c0c0c0;
    border-width: 0 1px 1px 0;
    font-weight: normal;
    line-height: 16px;
}

.props th:first-child {
    width: 21px;
    background: #f2f2f2;
}

.props thead th {
    height: 23px;
    background: linear-gradient(#fff, #efefef);
}

.props th:nth-child(2) {
    width: 190px;
}

.props td:nth-child(2) {
    padding-left: 19px;
}

.props .sel th {
    background: #ffd08a;
}

.props .sel td {
    background: #0078d7;
    color: #fff;
}

.link {
    color: #0000e6;
}

.link th, .off th {
    color: #000;
}

.off {
    color: #808080;
}

.props .group td:nth-child(2) {
    padding-left: 1px;
}

.group button {
    width: 13px;
    height: 13px;
    margin-right: 5px;
    border: 1px solid #b0b0b0;
    vertical-align: -2px;
    background: linear-gradient(#000, #000) center / 7px 1px no-repeat, linear-gradient(#000, #000) center / 1px 7px no-repeat;
}

/* section editor window */
.dialog {
    position: absolute;
    left: 157px;
    right: 16px;
    top: 20px;
    bottom: 4px;
    display: flex;
    flex-direction: column;
    padding: 1px 7px 6px;
    border: 1px solid #222;
    box-shadow: inset -1px -1px #5cc8ee;
    background: linear-gradient(#9ab4d2, #b9cfe8 30px);
}

.dialog h2 {
    height: 29px;
    line-height: 36px;
}

.dlg-body {
    display: flex;
    flex-direction: column;
    flex: 1;
    min-height: 0;
    background: #f0f0f0;
}

.dlg-tabs {
    display: flex;
    align-items: flex-end;
    height: 21px;
    padding-left: 2px;
}

.dlg-tabs button {
    width: 46px;
    height: 18px;
    padding-right: 10px;
    border: 1px solid #d9d9d9;
    border-bottom: 0;
}

.dlg-tabs .on {
    width: 51px;
    height: 20px;
    padding-bottom: 3px;
    background: #fff;
}

.dlg-panel {
    display: flex;
    flex-direction: column;
    flex: 1;
    min-height: 0;
    margin: 0 2px 3px 1px;
    padding: 3px 1px 2px 3px;
    background: #fff;
    border: 1px solid #dcdcdc;
}

.dlg-bar {
    display: flex;
    align-items: center;
    gap: 10px;
    height: 28px;
    flex: none;
    background: linear-gradient(#fcfcfc, #f1f1f1);
    padding: 0 0 2px 3px;
}

.dlg-bar .sep {
    margin: 0 -3px;
}

.dlg-bar .grip {
    width: 2px;
    height: 14px;
    margin-right: -4px;
    background: repeating-linear-gradient(#bbb 0 2px, transparent 2px 4px);
}

.info {
    color: #808080;
    gap: 2px;
    background: #f0f0f0;
}

.dlg-bar.info .grip {
    margin-right: 4px;
}

.combo.rebar {
    width: 133px;
    height: 23px;
    border: 1px solid #707070;
}

.rebar select {
    padding-left: 2px;
}

.cad {
    flex: 1;
    min-height: 0;
    width: 100%;
    background: #000;
    border: 2px solid #f00;
}

.cad path, .cad rect, .cad circle {
    fill: none;
}

.axis {
    stroke: #383838;
    stroke-dasharray: 10 3 3 3;
}

.axis .main {
    stroke: #5c5c5c;
}

.outline {
    stroke: #fff;
    stroke-width: 2;
}

.leader {
    stroke: #fff;
}

.stirrup {
    stroke: #f00;
    stroke-width: 5;
}

.dims {
    stroke: #0f0;
    stroke-width: 2;
    fill: none;
}

.cyan {
    color: #2ee;
}

.yellow {
    color: #ff2;
}

.magenta {
    color: #f0f;
}

.cad text {
    font: 19px "Liberation Serif", "Noto Sans CJK SC", serif;
    fill: #f2f2f2;
}

.cad .keys text {
    font-size: 18px;
}

.cad .vals text {
    font-size: 18px;
    fill: #00e000;
}

.cad .origin {
    font-size: 12px;
    fill: #555;
}

.dlg-status {
    display: flex;
    gap: 2px;
    height: 22px;
    flex: none;
}

.dlg-status span {
    width: 148px;
    padding: 2px 8px;
    border: 1px solid #d5d5d5;
    background: linear-gradient(#fff, #f1f1f1);
}

.dlg-status .fill {
    flex: 1;
    display: flex;
    justify-content: flex-end;
    align-items: flex-end;
    padding: 0;
}

.dlg-status svg {
    width: 12px;
    height: 12px;
}

/* status line */
.status {
    display: grid;
    grid-template-columns: 148px 78px 98px 48px 1fr 70px;
    gap: 2px;
    height: 21px;
    flex: none;
    padding-bottom: 1px;
    font-family: "Noto Sans CJK SC", sans-serif;
}

.status > span {
    border: 1px solid #d5d5d5;
    background: linear-gradient(#fff, #f1f1f1);
    padding: 1px 1px 0;
    white-space: nowrap;
}

/* taskbar */
.taskbar {
    display: flex;
    height: 40px;
    flex: none;
    background: #000a0d;
    color: #fff;
}

.start {
    width: 48px;
    background: #000;
}

.start svg {
    width: 16px;
    height: 16px;
    vertical-align: middle;
}

.cortana {
    display: flex;
    align-items: center;
    gap: 5px;
    width: 344px;
    padding: 0 14px 0 9px;
    background: #333;
}

.cortana svg {
    width: 22px;
    height: 22px;
}

.cortana input {
    flex: 1;
    min-width: 0;
    font-size: 14px;
}

.cortana input::placeholder {
    color: #999;
}

.cortana .mic {
    width: 12px;
    height: 16px;
    fill: none;
    stroke: #aaa;
}

.apps {
    display: flex;
    gap: 2px;
}

.apps button {
    display: flex;
    align-items: center;
    justify-content: center;
    width: 48px;
}

.apps svg {
    width: 24px;
    height: 24px;
}

.apps .run {
    background: linear-gradient(#76b9ed, #76b9ed) center bottom / 40px 2px no-repeat;
}

.apps .active {
    background: linear-gradient(#76b9ed, #76b9ed) center bottom / 48px 2px no-repeat #333c3f;
}

.white {
    color: #eee;
}

.ie {
    color: #3aa0e8;
}

.swirl {
    color: #1695f0;
}

.tray {
    display: flex;
    align-items: center;
    gap: 7px;
    margin-left: auto;
    padding-right: 25px;
    text-align: center;
}

.tray svg {
    width: 16px;
    height: 16px;
    fill: none;
    stroke: #fff;
}

.tray .kbd {
    width: 24px;
    height: 14px;
}

.tray .sg {
    margin: 0 6px;
    stroke: none;
}

.links {
    margin-right: 12px;
}

.cpu {
    margin-right: 10px;
}

.clock {
    margin: 0 14px 0 6px;
    line-height: 18px;
}

.note {
    display: flex;
    position: relative;
}

.note b {
    position: absolute;
    left: 8px;
    top: 7px;
    width: 16px;
    height: 16px;
    border: 1px solid #999;
    border-radius: 50%;
    background: #333;
    font-size: 11px;
    line-height: 14px;
}
```
